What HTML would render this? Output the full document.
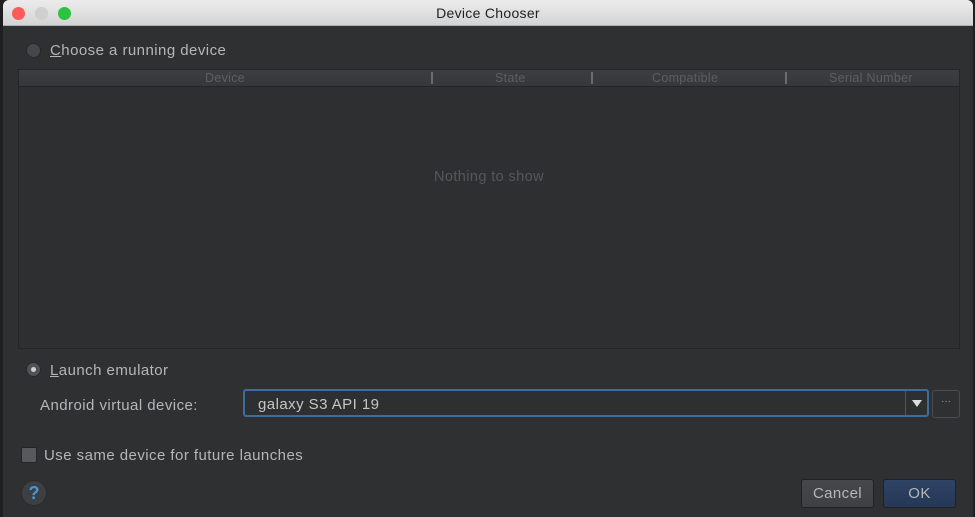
<!DOCTYPE html>
<html><head><meta charset="utf-8"><style>
*{margin:0;padding:0;box-sizing:border-box}
body{width:975px;height:517px;background:#1e1f20;font-family:"Liberation Sans",sans-serif;position:relative;overflow:hidden}
.win{position:absolute;left:3px;top:0;width:970px;height:517px;background:#2f3032;border-radius:6px 6px 0 0;overflow:hidden}
.title{height:26px;background:linear-gradient(#ececec,#d4d4d4);border-bottom:1px solid #b0b0b0;text-align:center;font-size:14px;line-height:27px;color:#222;letter-spacing:0.3px}
.dot{position:absolute;top:7px;width:13px;height:13px;border-radius:50%}
.t{position:absolute;color:#b4b6b8;font-size:15px;letter-spacing:0.45px}
.radio{position:absolute;width:15px;height:15px;border-radius:50%;background:#45484b;border:1px solid #26282a}
.table{position:absolute;left:15px;top:69px;width:942px;height:280px;border:1px solid #242527;background:#2e2f31}
.hdr{height:17px;background:linear-gradient(#3c3e40,#35373a);border-bottom:1px solid #242527;position:relative;font-size:12.5px;color:#5c5f62;letter-spacing:0.3px}
.hdr span{position:absolute;top:1px}
.sep{position:absolute;top:2px;width:2px;height:12px;background:#6a6c6e}
</style></head><body>
<div class="win">
<div class="title">Device Chooser</div>
<div class="dot" style="left:9px;background:#fc5b57"></div>
<div class="dot" style="left:32px;background:#cfcfcf"></div>
<div class="dot" style="left:55px;background:#2bc33f"></div>

<div class="radio" style="left:23px;top:43px"></div>
<div class="t" style="left:47px;top:42px"><u>C</u>hoose a running device</div>

<div class="table">
<div class="hdr">
<span style="left:186px">Device</span>
<div class="sep" style="left:412px"></div>
<span style="left:476px">State</span>
<div class="sep" style="left:572px"></div>
<span style="left:633px">Compatible</span>
<div class="sep" style="left:766px"></div>
<span style="left:810px">Serial Number</span>
</div>
<div style="position:absolute;left:0;width:100%;top:99px;text-align:center;font-size:14.5px;color:#55585b;letter-spacing:0.4px">Nothing to show</div>
</div>

<div class="radio" style="left:23px;top:362px;background:#505356"><div style="width:5px;height:5px;border-radius:50%;background:#d0d0d0;margin:4px"></div></div>
<div class="t" style="left:47px;top:362px"><u>L</u>aunch emulator</div>

<div class="t" style="left:37px;top:397px">Android virtual device:</div>
<div style="position:absolute;left:240px;top:389px;width:686px;height:28px;border:2px solid #3f6c9c;border-radius:3px;background:#2e2f31">
<div class="t" style="left:13px;top:5px;color:#c4c6c8">galaxy S3 API 19</div>
<div style="position:absolute;right:0;top:0;width:22px;height:24px;border-left:1px solid #555">
<div style="position:absolute;left:6px;top:9px;border-left:5px solid transparent;border-right:5px solid transparent;border-top:7px solid #ddd"></div></div>
</div>
<div style="position:absolute;left:929px;top:390px;width:28px;height:28px;border:1px solid #4a4c4f;border-radius:3px;color:#999;font-size:10px;text-align:center;line-height:22px">···</div>

<div style="position:absolute;left:18px;top:447px;width:16px;height:16px;background:#57595c;border:1px solid #242527;border-radius:2px"></div>
<div class="t" style="left:41px;top:447px">Use same device for future launches</div>

<div style="position:absolute;left:18px;top:480px;width:26px;height:26px;border-radius:50%;background:#3d4043;border:1px solid #2a2b2d;color:#4a95d6;font-weight:bold;font-size:18px;text-align:center;line-height:24px">?</div>

<div style="position:absolute;left:798px;top:479px;width:73px;height:29px;border:1px solid #222;border-radius:3px;background:linear-gradient(#45484b,#3e4043);color:#b4b6b8;font-size:15px;text-align:center;line-height:28px;letter-spacing:0.4px">Cancel</div>
<div style="position:absolute;left:880px;top:479px;width:73px;height:29px;border:1px solid #1c2230;border-radius:3px;background:linear-gradient(#2f4466,#263756);color:#b4b6b8;font-size:15px;text-align:center;line-height:28px;letter-spacing:0.4px">OK</div>
</div>
</body></html>
